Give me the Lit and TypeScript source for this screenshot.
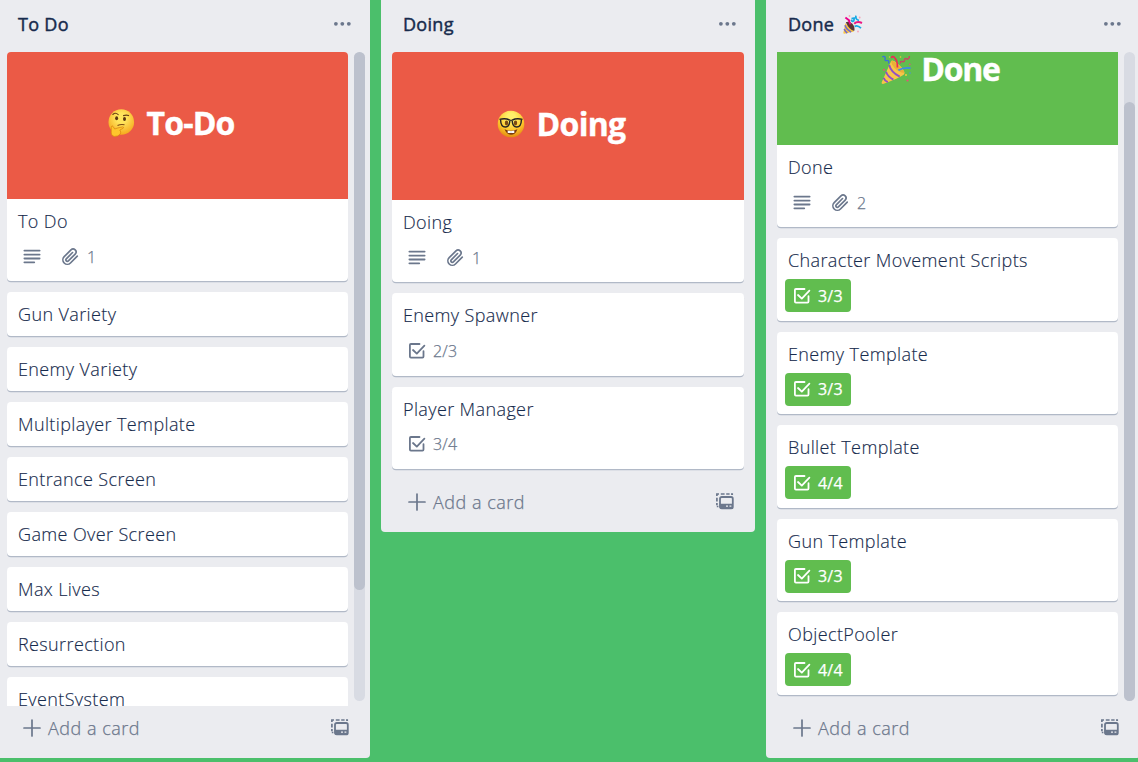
import { LitElement, html, svg, css, nothing } from "lit";
import { customElement, property } from "lit/decorators.js";

interface Cover { tone: "red" | "green"; emoji: "thinking" | "nerd" | "party"; label: string; }
interface Card { title: string; cover?: Cover; files?: number; check?: string; complete?: boolean; }
interface List { name: string; party?: boolean; cards: Card[]; thumb?: "top" | "bottom"; }

const LISTS: List[] = [
  {
    name: "To Do",
    thumb: "top",
    cards: [
      { title: "To Do", files: 1, cover: { tone: "red", emoji: "thinking", label: "To-Do" } },
      { title: "Gun Variety" },
      { title: "Enemy Variety" },
      { title: "Multiplayer Template" },
      { title: "Entrance Screen" },
      { title: "Game Over Screen" },
      { title: "Max Lives" },
      { title: "Resurrection" },
      { title: "EventSystem" },
    ],
  },
  {
    name: "Doing",
    cards: [
      { title: "Doing", files: 1, cover: { tone: "red", emoji: "nerd", label: "Doing" } },
      { title: "Enemy Spawner", check: "2/3" },
      { title: "Player Manager", check: "3/4" },
    ],
  },
  {
    name: "Done",
    party: true,
    thumb: "bottom",
    cards: [
      { title: "Done", files: 2, cover: { tone: "green", emoji: "party", label: "Done" } },
      { title: "Character Movement Scripts", check: "3/3", complete: true },
      { title: "Enemy Template", check: "3/3", complete: true },
      { title: "Bullet Template", check: "4/4", complete: true },
      { title: "Gun Template", check: "3/3", complete: true },
      { title: "ObjectPooler", check: "4/4", complete: true },
    ],
  },
];

const ICONS = {
  dots: svg`<g fill="currentColor"><circle cx="2.9" cy="7.8" r="1.9"/><circle cx="9.3" cy="7.8" r="1.9"/><circle cx="15.8" cy="7.8" r="1.9"/></g>`,
  text: svg`<g fill="currentColor"><rect x=".5" y="1.8" width="17" height="1.8" rx=".8"/><rect x=".5" y="5.7" width="17" height="1.8" rx=".8"/><rect x=".5" y="9.6" width="17" height="1.8" rx=".8"/><rect x=".5" y="13.4" width="11.6" height="1.8" rx=".8"/></g>`,
  clip: svg`<path transform="translate(.4 0) scale(.74)" fill="none" stroke="currentColor" stroke-width="2.25" stroke-linecap="round" d="M21.44 11.05l-9.19 9.19a6 6 0 0 1-8.49-8.49l9.19-9.19a4 4 0 0 1 5.66 5.66l-9.2 9.19a2 2 0 0 1-2.83-2.83l8.49-8.48"/>`,
  check: svg`<g fill="none" stroke="currentColor" stroke-width="1.8" stroke-linecap="round" stroke-linejoin="round"><path d="M11.5 2H2.9Q1.9 2 1.9 3V14.6Q1.9 15.6 2.9 15.6H14.5Q15.5 15.6 15.5 14.6V9.2"/><path d="M5 8L8.8 11.6L16.4 3.7"/></g>`,
  plus: svg`<path d="M9 1V17M1 9H17" fill="none" stroke="currentColor" stroke-width="1.7" stroke-linecap="round"/>`,
  template: svg`<g transform="translate(-.2 -.2)"><path fill="none" stroke="currentColor" stroke-width="1.7" d="M1.1 3.3V1.2H3.2M5 1.2H8.8M10.4 1.2H13.8M15.2 1.2h1.2v1M1.1 5V8.6M1.1 10.2V12.4M1 13.7H2.6"/><rect x="4.2" y="4.2" width="12.8" height="11.4" rx="1.7" fill="none" stroke="currentColor" stroke-width="1.8"/><path fill="currentColor" fill-rule="evenodd" d="M4 10.9h13v4.2q0 .9-1 .9H5q-1 0-1-.9zM10.2 12.6v1.4h2v-1.4zM13.7 12.6v1.4h1.9v-1.4z"/></g>`,
};

const EMOJI = {
  thinking: svg`<defs><radialGradient id="a" cx=".5" cy=".35" r=".65"><stop offset=".3" stop-color="#ffe45c"/><stop offset="1" stop-color="#f5a81c"/></radialGradient></defs><circle cx="14.3" cy="13" r="12.8" fill="url(#a)"/><path d="M5.8 5.5Q8.5 3 11.2 5.6M16.5 6.6Q19.5 5.7 21.6 6.6" fill="none" stroke="#6a4015" stroke-width="1.1" stroke-linecap="round"/><ellipse cx="9.6" cy="9.3" rx="1.5" ry="2" fill="#5b3510"/><ellipse cx="17.5" cy="10" rx="1.5" ry="2" fill="#5b3510"/><path d="M10.5 16.6Q14 14.8 17.5 15.8" fill="none" stroke="#7b4a13" stroke-width="1.1"/><path d="M4.3 18.1Q4.8 15.9 6 17.4L7.7 20Q10.5 18.8 15.5 17.9Q17.6 18 16 19.4L12.8 21Q14.6 23.1 13.2 25Q11.4 27.7 7.2 27.4Q4.4 27 4.2 24Z" fill="#ffc52c" stroke="#d98310" stroke-width=".7"/>`,
  nerd: svg`<defs><radialGradient id="b" cx=".5" cy=".25" r=".75"><stop offset=".2" stop-color="#fff06a"/><stop offset=".65" stop-color="#fdc52a"/><stop offset="1" stop-color="#e48a12"/></radialGradient></defs><circle cx="14" cy="14" r="13.3" fill="url(#b)"/><ellipse cx="9.5" cy="13" rx="1.7" ry="2.4" fill="#7c4a12"/><ellipse cx="18.5" cy="13" rx="1.7" ry="2.4" fill="#7c4a12"/><path d="M2.5 9.4Q8.5 8 12.5 10Q14 10.8 15.5 10Q19.5 8 25.5 9.4M3.6 10Q3.8 17 8.3 17Q12.4 17 12.8 11M24.4 10Q24.2 17 19.7 17Q15.6 17 15.2 11" fill="none" stroke="#262423" stroke-width="1.4"/><path d="M7.5 19.3Q14 22 20.5 19.3Q18.3 24.8 14 24.8Q9.7 24.8 7.5 19.3" fill="#7b3b10"/><path d="M10.7 20.5Q14 21.3 17.3 20.5V23H10.7Z" fill="#fff"/><path d="M14 21V23" stroke="#bbb" stroke-width=".5"/>`,
  party: svg`<path d="M10.2 6Q12 4.5 16.5 8.6Q24 15 23.4 18.7Q22.8 21.2 2 29Q.2 29.1.7 27.2Z" fill="#f8c548"/><path d="M10.2 6Q12 5 17 9.5Q23.5 15.5 23.3 18Q18 17.5 13.5 13Q10.2 9 10.2 6" fill="#eab038"/><path d="M8.2 10Q9.8 17 18.7 21.7M5 16.8Q6.5 21.5 12.4 24.7M2.5 22.8Q4 26 6.8 27.2" fill="none" stroke="#9150c4" stroke-width="1.9"/><path d="M16.4 12.5Q17 5.8 13 2Q11 .6 10.5 3.2" fill="none" stroke="#ee2855" stroke-width="1.7"/><path d="M17.4 15.3Q22.4 12.2 29.6 13.1" fill="none" stroke="#3d8ae8" stroke-width="1.8"/><path d="M1.3 1.8Q4.4.5 4.2 3.5Q3.2 6.4 6.6 5.4Q8.5 6 7.4 8.6" fill="none" stroke="#3973d6" stroke-width="1.4"/><path d="M19.5 8.5Q19 5.7 21.6 6.7Q24 7 23.4 4.6Q24.3 2.6 26.2 4.3Q28.4 4 28.4 1" fill="none" stroke="#c94762" stroke-width="1.4"/><g fill="#e94f7a"><circle cx="3" cy="14.8" r="1"/><circle cx="26.5" cy="25.5" r="1.1"/><circle cx="28.8" cy="9.4" r=".8"/></g><g fill="#f2cb3c"><circle cx="25" cy="20" r="1"/><circle cx="19.5" cy="2" r=".8"/><circle cx="8.5" cy="2" r=".7"/></g><circle cx="29" cy="18" r=".8" fill="#4c8de3"/>`,
  popper: svg`<path d="M2.3 8.2L11 16.4L1.3 18.8Q.1 18.8.4 17.5Z" fill="#ffc83d"/><path d="M2.8 7.2Q6 5.8 9.4 8.8Q12.4 12.5 11.2 16Q6 14.5 2.8 7.2" fill="#5b3835"/><path d="M2 10.3Q3.5 14.7 8.2 17M1.2 14Q2.2 16.5 4.3 18" fill="none" stroke="#7568c9" stroke-width="1.6"/><path d="M2.4 2.4L7 6M5.6 5L7.4 9.4" stroke="#ec008c" stroke-width="1.9"/><path d="M11.2 8.8Q14.2 5.8 19 8" fill="none" stroke="#ec1683" stroke-width="2"/><path d="M8.5 3.6L11.3 3L10.8 6Q8.3 7 8.8 4.8M12.8 .6Q12.6 5 16 5.3M11.6 11.4Q14.5 9.8 18 13.2" fill="none" stroke="#16a9e5" stroke-width="1.7"/><g fill="#f5a3ba"><circle cx="6.5" cy="1" r=".9"/><circle cx="16.7" cy="2.5" r=".9"/><circle cx="15" cy="16.5" r=".9"/></g>`,
};

@customElement("ui-icon")
export class UiIcon extends LitElement {
  @property() name: keyof typeof ICONS = "dots";
  static styles = css`:host { display: block; width: 18px; height: 18px; flex: none; } svg { display: block; overflow: visible; }`;
  render() { return html`<svg width="18" height="18" viewBox="0 0 18 18">${ICONS[this.name]}</svg>`; }
}

@customElement("board-card")
export class BoardCard extends LitElement {
  @property({ attribute: false }) card!: Card;
  static styles = css`
    :host { display: block; flex: none; background: #fff; border-radius: 4px; box-shadow: 0 1.3px 0 #b1b9c7; overflow: hidden; color: #172b4d; }
    .cover { box-sizing: border-box; height: var(--cover-height, 147px); display: flex; align-items: center; justify-content: center; color: #fff; font: 700 32px/40px "Open Sans", sans-serif; padding: 0 13px 5px 0; }
    .cover svg { display: block; overflow: visible; margin: 2px 9px 0 0; }
    .cover span { display: block; white-space: nowrap; -webkit-text-stroke: .4px #fff; }
    .red { background: #eb5a46; }
    .green { background: #61bd4f; }
    .thinking { letter-spacing: -.8px; }
    .nerd { letter-spacing: -.7px; padding-right: 14px; }
    .nerd svg { margin-right: 10px; }
    .party { letter-spacing: -1.2px; padding-right: 14px; }
    .party svg { margin-right: 10px; }
    .body { box-sizing: border-box; height: 44px; padding: 10px 11px 0; }
    .body.rich { height: 82.5px; }
    .covered .body.rich { height: 82px; }
    .title { height: 25px; font-size: 18px; line-height: 25px; letter-spacing: .38px; white-space: nowrap; -webkit-text-stroke: .15px currentColor; }
    .badges { display: flex; height: 33px; margin: 6px 0 0 -3px; color: #6b778c; font-size: 16px; -webkit-text-stroke: .25px currentColor; }
    .badge { display: flex; align-items: center; gap: 7px; padding: 0 8px; border-radius: 4px; height: 33px; letter-spacing: .2px; }
    .badge + .badge { margin-left: 4px; gap: 8px; }
    .complete { background: #61bd4f; color: #fff; font-weight: 400; }
  `;
  render() {
    const c = this.card;
    const rich = c.files || c.check;
    return html`<div class=${c.cover ? "covered" : ""}>
      ${c.cover ? html`<div class="cover ${c.cover.tone} ${c.cover.emoji}"><svg width="30" height="30" viewBox="0 0 30 30">${EMOJI[c.cover.emoji]}</svg><span>${c.cover.label}</span></div>` : nothing}
      <div class="body ${rich ? "rich" : ""}">
        <div class="title">${c.title}</div>
        ${rich ? html`<div class="badges">
          ${c.files ? html`<div class="badge"><ui-icon name="text"></ui-icon></div><div class="badge"><ui-icon name="clip"></ui-icon><span>${c.files}</span></div>` : nothing}
          ${c.check ? html`<div class="badge ${c.complete ? "complete" : ""}"><ui-icon name="check"></ui-icon><span>${c.check}</span></div>` : nothing}
        </div>` : nothing}
      </div>
    </div>`;
  }
}

@customElement("board-list")
export class BoardList extends LitElement {
  @property({ attribute: false }) list!: List;
  static styles = css`
    :host { display: flex; flex-direction: column; box-sizing: border-box; width: 374px; max-height: 758px; flex: none; background: #ebecf0; border-radius: 0 0 4px 4px; color: #6b778c; }
    .head { display: flex; align-items: center; height: 52px; flex: none; box-sizing: border-box; padding: 0 19px 3px 22px; }
    .name { color: #172b4d; font-size: 18px; line-height: 25px; font-weight: 400; letter-spacing: .3px; -webkit-text-stroke: .45px currentColor; }
    .head svg { display: block; margin: 0 auto 0 9px; overflow: visible; }
    .head ui-icon { margin-left: auto; }
    .head svg + ui-icon { margin-left: 0; }
    .middle { display: flex; min-height: 0; padding: 0 5px 0 11px; gap: 6px; }
    .middle.plain { padding-right: 11px; --cover-height: 148px; }
    .cards { display: flex; flex-direction: column; flex: 1; min-width: 0; gap: 11px; overflow: hidden; height: 654px; }
    .plain .cards { height: auto; overflow: visible; }
    .scrolled .cards board-card:first-child { margin-top: -54px; }
    .track { width: 11px; height: 649px; flex: none; background: #d8dbe3; border-radius: 6px; display: flex; }
    .thumb { width: 11px; height: 538px; background: #bcc1cd; border-radius: 6px; }
    .scrolled .track { align-items: flex-end; }
    .scrolled .thumb { height: 599px; }
    .foot { display: flex; align-items: center; box-sizing: border-box; height: 52px; flex: none; padding: 0 21px 8px 27px; font-size: 18px; line-height: 25px; letter-spacing: .5px; -webkit-text-stroke: .25px currentColor; }
    .plain + .foot { height: 62.5px; padding-top: 12px; padding-bottom: 8px; }
    .foot span { margin: 0 auto 0 7px; }
  `;
  render() {
    const l = this.list;
    return html`
      <div class="head"><div class="name">${l.name}</div>${l.party ? html`<svg width="20" height="20" viewBox="0 0 20 20">${EMOJI.popper}</svg>` : nothing}<ui-icon name="dots"></ui-icon></div>
      <div class="middle ${l.thumb ? "" : "plain"} ${l.thumb === "bottom" ? "scrolled" : ""}">
        <div class="cards">${l.cards.map((c) => html`<board-card .card=${c}></board-card>`)}</div>
        ${l.thumb ? html`<div class="track"><div class="thumb"></div></div>` : nothing}
      </div>
      <div class="foot"><ui-icon name="plus"></ui-icon><span>Add a card</span><ui-icon name="template"></ui-icon></div>`;
  }
}

@customElement("app-root")
export class AppRoot extends LitElement {
  static styles = css`
    :host { display: block; width: 100vw; height: 762px; overflow: hidden; background: #4bbf6b; font-family: "Open Sans", "Noto Sans", sans-serif; font-weight: 300; }
    .board { display: flex; align-items: flex-start; gap: 11px; margin-left: -4px; }
  `;
  render() { return html`<div class="board">${LISTS.map((l) => html`<board-list .list=${l}></board-list>`)}</div>`; }
}
